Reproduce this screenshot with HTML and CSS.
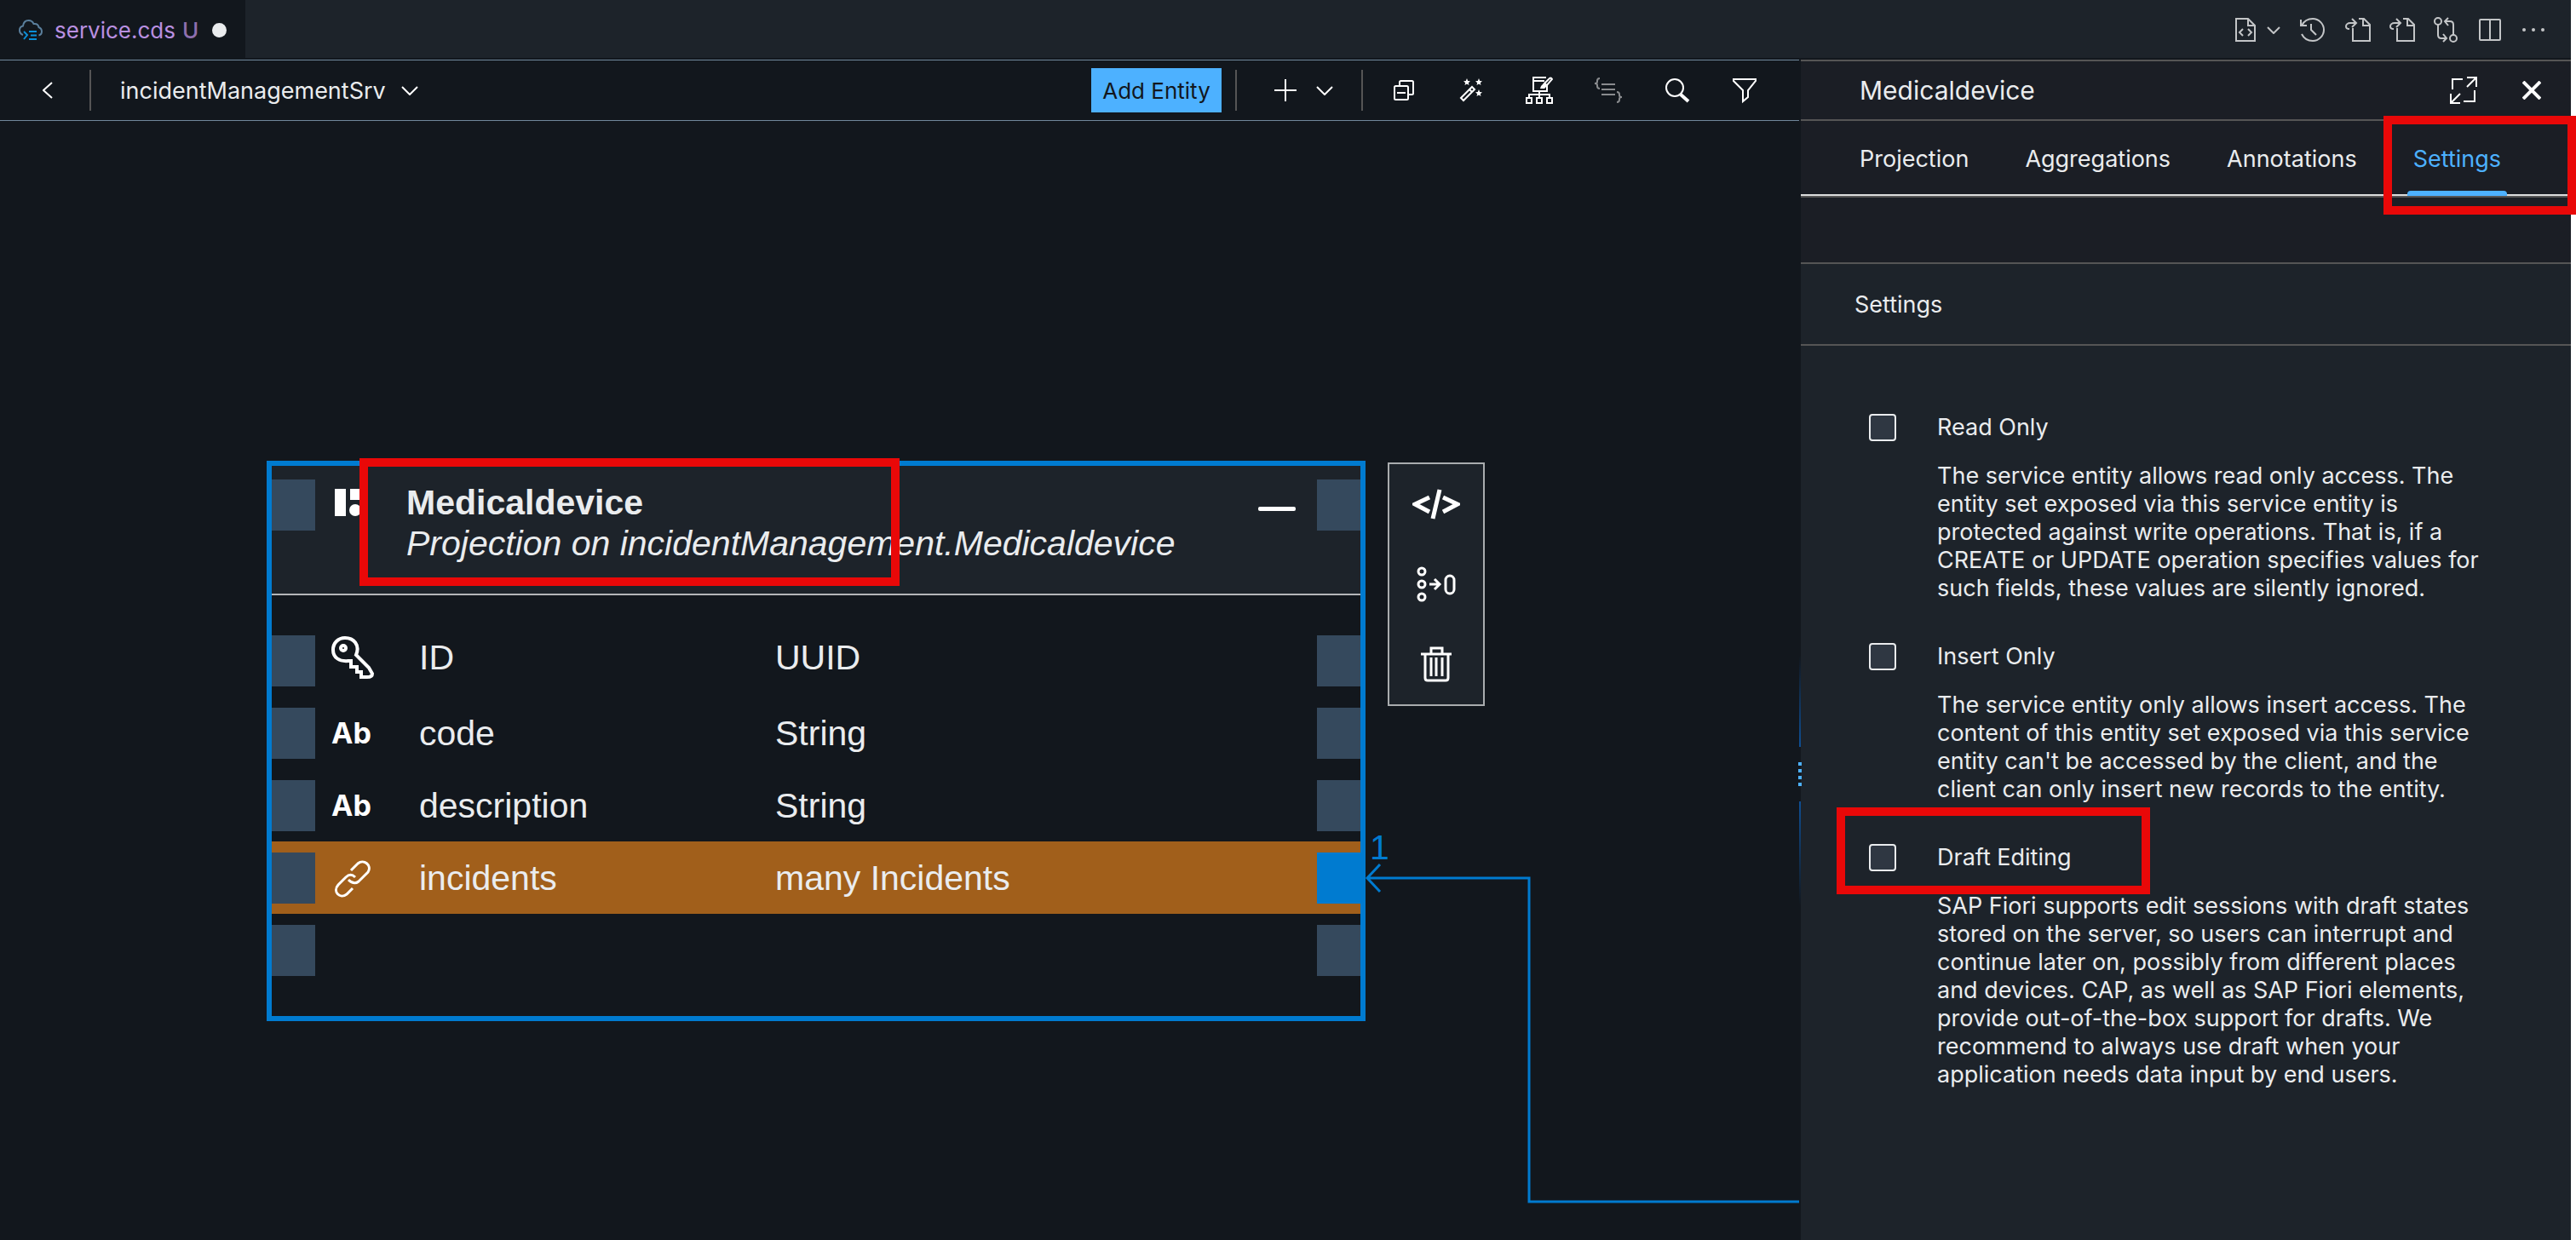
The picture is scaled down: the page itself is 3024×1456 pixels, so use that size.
FILE: index.html
```html
<!DOCTYPE html>
<html lang="en">
<head>
<meta charset="utf-8">
<title>service.cds</title>
<link rel="stylesheet" href="styles.css">
</head>
<body>
<div class="app">
  <header class="tabbar">
    <div class="file-tab">
      <svg class="file-icon" width="28" height="24" viewBox="0 0 28 24" fill="none">
        <path d="M5 18C2 17 1 15 1 12.500C1 10 2.500 8 5 7.500C5.500 3.500 8 1 11.500 1C14.500 1 16.500 2.500 17.500 5C21 4.500 23 6 23.500 9C26 10 27 12 27 14C27 16.500 26 18 23.500 18.500" stroke="#5a7f9c" stroke-width="2"/>
        <path d="M6 14L10 18L6 23M12 14H21M14 18.500H21M12 23H21" stroke="#0a8fd8" stroke-width="2"/>
      </svg>
      <span class="file-name">service.cds</span>
      <span class="file-state">U</span>
      <span class="dirty-dot"></span>
    </div>
    <div class="editor-actions">
      <button class="icon-button code-file" aria-label="Open code editor"><svg width="24" height="28" viewBox="0 0 24 28"><path d="M1 1H15L23 9V27H1ZM15 1V9H23M9 13L5 17L9 21M15 13L19 17L15 21"/></svg></button>
      <button class="icon-button" aria-label="More editors"><svg width="16" height="9" viewBox="0 0 16 9"><path d="M1 1L8 8L15 1"/></svg></button>
      <button class="icon-button history" aria-label="History"><svg width="30" height="28" viewBox="0 0 30 28"><path d="M2 2V9H9M3 9C6 3 11 1 16 1C23 1 29 7 29 14C29 21 23 27 16 27C9 27 5 23 3 19M14 7V14L20 20"/></svg></button>
      <button class="icon-button" aria-label="Previous change"><svg width="30" height="28" viewBox="0 0 30 28"><path d="M16 1H22L29 8V27H9V12M21 1V9H29M8 1L13 6L8 11M13 6H6C3 6 1 8 1 10C1 12 2 13 5 13"/></svg></button>
      <button class="icon-button" aria-label="Next change"><svg width="30" height="28" viewBox="0 0 30 28"><path d="M16 1H22L29 8V27H9V12M21 1V9H29M8 1L13 6L8 11M13 6H6C3 6 1 8 1 10C1 12 2 13 5 13"/></svg></button>
      <button class="icon-button" aria-label="Compare"><svg width="28" height="30" viewBox="0 0 28 30"><circle cx="5" cy="5" r="4"/><circle cx="23" cy="25" r="4"/><path d="M5 9V21Q5 25 9 25H15M11 20L15 25L11 29M23 21V9Q23 5 19 5H13M17 1L13 5L17 10"/></svg></button>
      <button class="icon-button split" aria-label="Split editor"><svg width="26" height="26" viewBox="0 0 26 26"><rect x="1" y="1" width="24" height="24" rx="1"/><path d="M13 1V25"/></svg></button>
      <button class="icon-button" aria-label="More actions"><svg width="26" height="4" viewBox="0 0 26 4"><g class="solid"><circle cx="2" cy="2" r="2"/><circle cx="13" cy="2" r="2"/><circle cx="24" cy="2" r="2"/></g></svg></button>
    </div>
  </header>

  <div class="workspace">
    <main class="editor">
      <div class="toolbar">
        <button class="icon-button back" aria-label="Back"><svg width="12" height="20" viewBox="0 0 12 20"><path d="M11 1L1 10L11 19"/></svg></button>
        <span class="divider"></span>
        <button class="service-picker">incidentManagementSrv<svg width="20" height="11" viewBox="0 0 20 11"><path d="M1 1L10 10L19 1"/></svg></button>
        <div class="tools">
          <button class="primary">Add Entity</button>
          <span class="divider"></span>
          <button class="icon-button add" aria-label="Add"><svg width="26" height="26" viewBox="0 0 26 26"><path d="M13 0V26M0 13H26"/></svg></button>
          <button class="icon-button" aria-label="Add options"><svg width="20" height="11" viewBox="0 0 20 11"><path d="M1 1L10 10L19 1"/></svg></button>
          <span class="divider second"></span>
          <div class="tool-icons">
            <button class="icon-button" aria-label="Collapse all"><svg width="32" height="32" viewBox="0 0 32 32"><path d="M12 10V6.500Q12 5 13.500 5H26.500Q28 5 28 6.500V19.500Q28 21 26.500 21H23M7.500 11H20.500Q22 11 22 12.500V25.500Q22 27 20.500 27H7.500Q6 27 6 25.500V12.500Q6 11 7.500 11ZM9 19H19"/></svg></button>
            <button class="icon-button" aria-label="Auto layout"><svg width="32" height="32" viewBox="0 0 32 32"><path d="M4 25L17 12L20 15L7 28ZM14 15L17 18"/><path class="solid" d="M11 2L12.200 5L15 5.200L12.800 7.200L13.500 10L11 8.500L8.500 10L9.200 7.200L7 5.200L9.800 5ZM25 2L26.200 5L29 5.200L26.800 7.200L27.500 10L25 8.500L22.500 10L23.200 7.200L21 5.200L23.800 5ZM25 15L26.200 18L29 18.200L26.800 20.200L27.500 23L25 21.500L22.500 23L23.200 20.200L21 18.200L23.800 18Z"/></svg></button>
            <button class="icon-button" aria-label="Edit structure"><svg width="32" height="34" viewBox="0 0 32 34"><path d="M25 11V18H9V2H24M9 6H22M16 18V25M4 26V22H28V26M1 26H7V32H1ZM13 26H19V32H13ZM25 26H31V32H25Z"/><path d="M22 9L28 3Q30 2 31 4L25 11Z"/><path class="solid" d="M21 9L25 12L22 15H17L18 12Z"/></svg></button>
            <button class="icon-button disabled" aria-label="Show code" disabled><svg width="34" height="32" viewBox="0 0 34 32"><path d="M7 2Q4 2 4 5V6Q4 8 1 8Q4 8 4 10V11Q4 14 7 14M9 9H25M9 15H25M9 21H25M27 18Q30 18 30 21V22Q30 24 33 24Q30 24 30 26V27Q30 30 27 30"/></svg></button>
            <button class="icon-button" aria-label="Search"><svg width="32" height="32" viewBox="0 0 32 32"><circle cx="13" cy="13" r="10"/><path d="M20 21L29 29" class="thick"/></svg></button>
            <button class="icon-button" aria-label="Filter"><svg width="32" height="32" viewBox="0 0 32 32"><path d="M2 3H28V5L19 16V24L13 29V16L2 5Z"/></svg></button>
          </div>
        </div>
      </div>

      <div class="canvas">
        <svg class="edges" width="100%" height="100%" aria-hidden="true">
          <path d="M1605 889H1795V1269H2600M1620 873L1605 889L1620 905"/>
        </svg>
        <span class="cardinality">1</span>

        <section class="entity">
          <div class="entity-head">
            <span class="port"></span>
            <svg class="entity-icon" width="32" height="32" viewBox="0 0 32 32" fill="#fff"><path d="M0 0H13V32H0ZM18 0H31V13H18Z"/><circle cx="24" cy="25" r="7"/></svg>
            <div class="entity-title">
              <h2>Medicaldevice</h2>
              <p>Projection on incidentManagement.Medicaldevice</p>
            </div>
            <button class="collapse" aria-label="Collapse"></button>
            <span class="port"></span>
          </div>
          <div class="entity-body">
            <div class="field key">
              <span class="port"></span>
              <svg class="field-icon" width="50" height="50" viewBox="0 0 50 50" fill="none" stroke="#fff" stroke-width="4"><path d="M29 22C34 10 26 2 16 2C8 2 2 8 2 16C2 25 9 30 20 29H23V36H30V42H35V48H42Q48 48 48 44L44 37Z"/><circle cx="14" cy="14" r="3"/></svg>
              <span class="field-name">ID</span><span class="field-type">UUID</span><span class="port"></span>
            </div>
            <div class="field">
              <span class="port"></span><span class="type-icon">Ab</span><span class="field-name">code</span><span class="field-type">String</span><span class="port"></span>
            </div>
            <div class="field">
              <span class="port"></span><span class="type-icon">Ab</span><span class="field-name">description</span><span class="field-type">String</span><span class="port"></span>
            </div>
            <div class="field association">
              <span class="port"></span>
              <svg class="field-icon" width="50" height="50" viewBox="0 0 50 50" fill="none" stroke="#fff" stroke-width="3"><path d="M23 16L31 8C38 2 48 10 43 18L32 29C27 33 23 30 20 27M28 24C25 21 21 20 17 24L8 33C1 41 10 50 18 44L25 37"/></svg>
              <span class="field-name">incidents</span><span class="field-type">many Incidents</span><span class="port linked"></span>
            </div>
            <div class="field"><span class="port"></span><span class="port last"></span></div>
          </div>
        </section>

        <div class="entity-actions">
          <button aria-label="Show code"><svg width="56" height="36" viewBox="0 0 56 36" stroke-width="5"><path d="M20 10L3 18L20 27M36 10L53 18L36 27M32 1L24 35"/></svg></button>
          <button aria-label="Aggregate"><svg width="48" height="44" viewBox="0 0 48 44" stroke-width="3"><circle cx="7" cy="7" r="4"/><circle cx="7" cy="22" r="4"/><circle cx="7" cy="37" r="4"/><path d="M16 22H28M22 16L28 22L22 28"/><rect x="35" y="12" width="10" height="21" rx="5"/></svg></button>
          <button aria-label="Delete"><svg width="36" height="42" viewBox="0 0 36 42" stroke-width="3"><path d="M0 9H36M12 8V2H25V8M5 10V37Q5 40 8 40H29Q32 40 32 37V10M12 13V35M18 13V35M25 13V35"/></svg></button>
        </div>

        <div class="highlight name-highlight"></div>
      </div>
    </main>

    <div class="splitter"><i></i><span class="grip"><b></b><b></b><b></b><b></b></span><i class="down"></i></div>

    <aside class="panel">
      <div class="panel-head">
        <h1>Medicaldevice</h1>
        <button class="icon-button" aria-label="Full screen"><svg width="32" height="32" viewBox="0 0 32 32"><path d="M20 1H31V12M31 1L20 12M15 3H3V15M1 20V31H12M1 31L12 20M16 29H29V16"/></svg></button>
        <button class="icon-button close" aria-label="Close"><svg width="22" height="22" viewBox="0 0 22 22"><path d="M1 1L21 21M21 1L1 21"/></svg></button>
      </div>
      <nav class="panel-tabs">
        <a href="#projection">Projection</a>
        <a href="#aggregations">Aggregations</a>
        <a href="#annotations">Annotations</a>
        <a href="#settings" class="active">Settings</a>
        <div class="highlight tab-highlight"></div>
      </nav>
      <div class="panel-gap"></div>
      <h2 class="section-title" id="settings">Settings</h2>
      <form class="options">
        <div class="option">
          <input type="checkbox" id="read-only"><label for="read-only">Read Only</label>
          <p>The service entity allows read only access. The entity set exposed via this service entity is protected against write operations. That is, if a CREATE or UPDATE operation specifies values for such fields, these values are silently ignored.</p>
        </div>
        <div class="option">
          <input type="checkbox" id="insert-only"><label for="insert-only">Insert Only</label>
          <p>The service entity only allows insert access. The content of this entity set exposed via this service entity can't be accessed by the client, and the client can only insert new records to the entity.</p>
        </div>
        <div class="option">
          <input type="checkbox" id="draft"><label for="draft">Draft Editing</label>
          <p>SAP Fiori supports edit sessions with draft states stored on the server, so users can interrupt and continue later on, possibly from different places and devices. CAP, as well as SAP Fiori elements, provide out-of-the-box support for drafts. We recommend to always use draft when your application needs data input by end users.</p>
          <div class="highlight draft-highlight"></div>
        </div>
      </form>
    </aside>
  </div>
</div>
</body>
</html>
```

FILE: styles.css
```css
* { box-sizing: border-box; }

body {
  margin: 0;
  background: #fff;
  color: #eaecee;
  font: 27px/33px Inter, "Liberation Sans", sans-serif;
}

h1, h2, p { margin: 0; font-weight: 400; }

button {
  display: flex;
  align-items: center;
  padding: 0;
  border: 0;
  background: none;
  color: inherit;
  font: inherit;
}

svg { display: block; flex: none; }

.icon-button svg, .service-picker svg {
  fill: none;
  stroke: #fff;
  stroke-width: 2;
}

.icon-button svg .solid { fill: #fff; stroke: none; }
.icon-button svg .thick { stroke-width: 4; }

.app {
  display: flex;
  flex-direction: column;
  min-height: 100vh;
  margin-right: 6px;
  background: #12171d;
}

/* Editor tab strip */
.tabbar {
  display: flex;
  height: 70px;
  border-bottom: 2px solid #12171d;
  background: #1d232a;
}

.file-tab {
  display: flex;
  align-items: center;
  padding: 2px 22px 0;
  background: #12171d;
  font-size: 26px;
}

.file-name { margin-left: 14px; color: #b98fe0; }
.file-state { margin-left: 8px; color: #8e6fae; font-weight: 500; }
.dirty-dot { flex: none; width: 17px; height: 17px; margin-left: 16px; border-radius: 50%; background: #eaecee; }

.editor-actions {
  display: flex;
  align-items: center;
  gap: 22px;
  margin-left: auto;
  padding: 2px 31px 0 0;
}

.editor-actions .icon-button svg { stroke: #c3c5c7; }
.editor-actions .icon-button svg .solid { fill: #c3c5c7; }
.editor-actions .code-file { margin-right: -9px; }
.editor-actions .history { margin: 0 2px 0 0; }
.editor-actions .split { margin: 0 3px; }

.workspace { display: flex; flex: 1; }

.editor { display: flex; flex: 1; flex-direction: column; min-width: 0; }

.toolbar {
  display: flex;
  align-items: center;
  height: 72px;
  border-top: 1px solid #70879b;
  border-bottom: 1px solid #70879b;
}

.back { margin: 0 43px 0 50px; }

.divider { width: 2px; height: 48px; background: #555; }

.service-picker { gap: 18px; margin-left: 34px; font-size: 27px; }

.tools { display: flex; align-items: center; margin-left: auto; padding-right: 47px; }

.primary {
  justify-content: center;
  width: 153px;
  height: 52px;
  margin-right: 16px;
  background: #4db1ff;
  color: #12171d;
  font-size: 26px;
}

.add { margin: 0 23px 0 44px; }
.second { margin: 0 31px 0 33px; }

.tool-icons { display: flex; align-items: center; gap: 48px; }

.disabled svg { opacity: 0.5; }

/* Diagram */
.canvas {
  position: relative;
  flex: 1;
  overflow: hidden;
  font: 41px/48px "Liberation Sans", Arial, sans-serif;
}

.edges {
  position: absolute;
  inset: 0;
  fill: none;
  stroke: #007bd0;
  stroke-width: 3;
}

.cardinality { position: absolute; left: 1608px; top: 829px; color: #007bd0; }

.entity {
  position: absolute;
  left: 313px;
  top: 399px;
  width: 1290px;
  border: 6px solid #007bd0;
}

.entity-head {
  display: flex;
  align-items: flex-start;
  height: 152px;
  padding-top: 16px;
  border-bottom: 2px solid #b4b6b8;
  background: #1d232a;
}

.port { width: 51px; height: 60px; background: #35495d; }
.entity-icon { margin: 11px 52px 0 23px; }
.entity-title { flex: 1; padding-top: 3px; }
.entity-title h2 { font-size: 41px; line-height: 48px; font-weight: 700; }
.entity-title p { font-style: italic; }

.collapse {
  width: 44px;
  height: 5px;
  margin: 32px 25px 0 0;
  border-radius: 2px;
  background: #fff;
}

.entity-body { padding: 34px 0 35px; }

.field { display: flex; align-items: center; height: 85px; }
.field-icon, .type-icon { width: 50px; margin: 0 53px 0 19px; }
.key .field-icon, .key .field-name, .key .field-type { margin-bottom: 8px; }
.type-icon { font: 700 34px/40px Inter, sans-serif; color: #fff; }
.field-name { width: 418px; }
.field-type { flex: 1; }
.association { background: #a15f1b; }
.linked { background: #007bd0; }
.last { margin-left: auto; }

.entity-actions {
  position: absolute;
  left: 1629px;
  top: 401px;
  width: 114px;
  border: 2px solid #a9acae;
  background: #1d232a;
}

.entity-actions button { justify-content: center; width: 100%; height: 94px; }
.entity-actions svg { fill: none; stroke: #fff; }

.highlight { position: absolute; border: 10px solid #e90808; pointer-events: none; }
.name-highlight { left: 422px; top: 396px; width: 634px; height: 150px; }

/* Splitter between the diagram and the property panel */
.splitter {
  display: flex;
  flex-direction: column;
  align-items: center;
  width: 2px;
  padding-top: 700px;
}

.splitter i { width: 2px; height: 107px; background: linear-gradient(#12171d, #0f4f94); }
.splitter .down { height: 123px; background: linear-gradient(#0f4f94, #12171d); }

.grip { position: relative; display: grid; gap: 4px; padding: 18px 0; }
.grip b { width: 4px; height: 4px; background: #4db1ff; }

/* Property panel */
.panel { width: 904px; background: #1d232a; }

.panel-head {
  display: flex;
  align-items: center;
  height: 72px;
  padding: 0 35px 0 69px;
  border-top: 2px solid #555;
  border-bottom: 2px solid #555;
  background: #1b1e25;
}

.panel-head h1 { flex: 1; font-size: 30px; }
.panel-head .close { margin-left: 53px; }
.panel-head .close svg { stroke-width: 4; }

.panel-tabs {
  position: relative;
  display: flex;
  gap: 52px;
  height: 88px;
  padding-left: 62px;
  border-bottom: 2px solid #dcdddd;
  background: #1b1e25;
}

.panel-tabs a {
  height: 88px;
  padding: 0 7px;
  color: inherit;
  line-height: 90px;
  text-decoration: none;
}

.panel-tabs .active { position: relative; color: #4db1ff; }

.panel-tabs .active::after {
  content: "";
  position: absolute;
  inset: auto 0 0;
  height: 6px;
  border-radius: 4px 4px 0 0;
  background: #4db1ff;
}

.tab-highlight { right: -6px; top: -6px; width: 226px; height: 116px; }

.panel-gap { height: 80px; border-top: 2px solid #555; border-bottom: 2px solid #555; background: #1b1e25; }

.section-title {
  padding: 31px 63px 30px;
  border-bottom: 2px solid #555;
  font-size: 27px;
}

.options { display: grid; gap: 48px; padding: 80px 88px 0 80px; }

.option {
  position: relative;
  display: grid;
  grid-template-columns: 32px 1fr;
  gap: 24px 48px;
  align-items: center;
}

.option label { line-height: 32px; }
.option p { grid-column: 2; }

.option input {
  width: 32px;
  height: 32px;
  margin: 0;
  border: 2px solid #eaecee;
  border-radius: 4px;
  background: #2f3742;
  appearance: none;
}

.draft-highlight { left: -38px; top: -43px; width: 368px; height: 102px; }
```
